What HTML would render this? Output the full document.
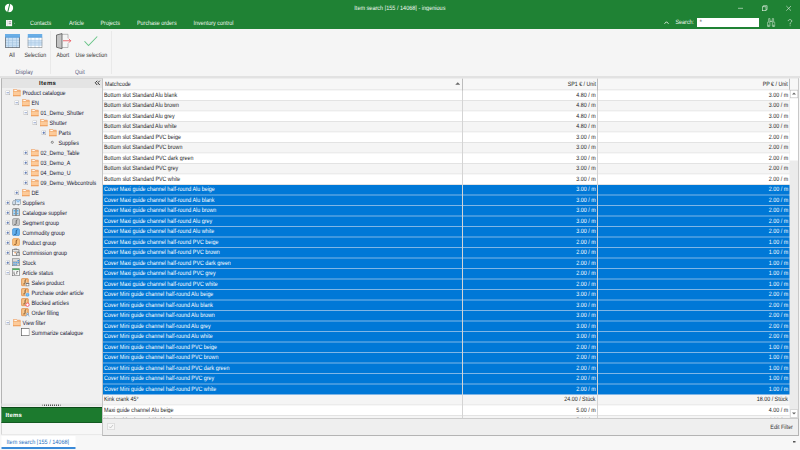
<!DOCTYPE html>
<html><head><meta charset="utf-8">
<style>
*{margin:0;padding:0;box-sizing:border-box}
html,body{width:800px;height:450px;overflow:hidden;background:#f5f5f5}
body{font-family:"Liberation Sans",sans-serif;text-rendering:geometricPrecision}
#z{position:absolute;left:0;top:0;width:1600px;height:900px;transform:scale(0.5);transform-origin:0 0;overflow:hidden;background:#f5f5f5}
.a{position:absolute}
#hdr{left:0;top:0;width:1600px;height:58px;background:#1f8234}
.mt{position:absolute;top:38px;font-size:12.5px;color:#eef5ee;line-height:14px;white-space:nowrap;transform:scaleX(0.864);transform-origin:0 0}
#title{position:absolute;top:8px;left:0;width:1600px;text-align:center;font-size:12.5px;color:#f2f8f2;line-height:14px;transform:scaleX(0.883);transform-origin:798px 0}
#ribbon{left:0;top:58px;width:1600px;height:94px;background:#f5f5f5}
.rl{position:absolute;font-size:12.5px;color:#333;line-height:14px;white-space:nowrap;margin-top:-2px;transform:scaleX(0.844);transform-origin:0 0}
.gl{position:absolute;font-size:12.5px;color:#5a5a7a;line-height:14px;white-space:nowrap;transform:scaleX(0.844);transform-origin:0 0}
.sep{position:absolute;width:1px;background:#dcdcdc}
#band{left:0;top:152px;width:1600px;height:4px;background:#e2e2e2}
#left{left:2px;top:156px;width:202px;height:713px;background:#f0f0f0;border-left:2px solid #b4b4b4;border-top:2px solid #d2d2d2}
#lefthdr{left:4px;top:158px;width:200px;height:18px;background:#e4e4e4}
.tb{position:absolute}
.ti{position:absolute;width:18px;height:18px}
.ti svg{display:block}
.tt{position:absolute;font-size:12.5px;line-height:20px;color:#161630;white-space:nowrap;transform:scaleX(0.855);transform-origin:0 0}
#grid{left:204px;top:156px;width:1394px;height:681px;background:#fff;border-left:2px solid #c4c4c4;border-right:2px solid #c8c8c8;border-top:1px solid #d4d4d4;overflow:hidden}
#gh{position:absolute;left:0;top:0;width:1394px;height:24px;background:#f7f7f7;border-bottom:2px solid #e0e0e0}
.ghc{position:absolute;top:0;font-size:12.5px;line-height:22px;color:#262626;white-space:nowrap;transform:scaleX(0.844)}
#rows{position:absolute;left:0;top:24px;width:1374px}
.r{position:relative;height:21px;background:#fff;border-bottom:2px solid #e3e3e3;font-size:12.5px;line-height:19px;color:#262626;white-space:nowrap}
.r.g{background:#f5f5f5}
.r.s{background:#0078d7;color:#fff;border-bottom:2px solid #80b6e6}
.c1{position:absolute;left:1.5px;top:-1px;transform:scaleX(0.855);transform-origin:0 0}
.c2{position:absolute;right:389px;top:-1px;transform:scaleX(0.855);transform-origin:100% 0}
.c3{position:absolute;right:4px;top:-1px;transform:scaleX(0.855);transform-origin:100% 0}
.vl{position:absolute;top:0;width:2px;height:682px;background:#d4d4d4}
#sb{position:absolute;left:1373px;top:22px;width:20px;height:660px;background:#ebebeb}
#filter{left:204px;top:836px;width:1394px;height:36px;background:#efefef;border-left:2px solid #c4c4c4;border-right:2px solid #b4b4b4;border-bottom:2px solid #b4b4b4;border-top:2px solid #cccccc}
#tabbar{left:0;top:872px;width:1600px;height:28px;background:#f7f7f7}
</style></head><body><div id="z">
<div id="hdr" class="a">
 <svg class="a" style="left:9px;top:7px" width="18" height="18" viewBox="0 0 18 18"><circle cx="9" cy="9" r="8.4" fill="#fff"/><path d="M10.5 1 L6.5 17" stroke="#1f8234" stroke-width="2"/></svg>
 <div id="title">Item search [155 / 14068] - ingenious</div>
 <svg class="a" style="left:1474px;top:14px" width="14" height="6"><path d="M2 2.6h10" stroke="#e8f2e8" stroke-width="1.2"/></svg>
 <svg class="a" style="left:1520px;top:8px" width="18" height="18"><rect x="4.6" y="5.6" width="7.4" height="7.8" fill="none" stroke="#e8f2e8" stroke-width="1.2"/><path d="M6.6 5.6V3.4h7.6v7.8h-2.2" fill="none" stroke="#e8f2e8" stroke-width="1.2"/></svg>
 <svg class="a" style="left:1570px;top:9px" width="16" height="16"><path d="M2.6 3l9.4 9.4M12 3L2.6 12.4" stroke="#e8f2e8" stroke-width="1.2"/></svg>
 <svg class="a" style="left:11px;top:39px" width="24" height="14"><rect x="1" y="1" width="12.2" height="12.6" fill="#f8f8f8"/><path d="M3.6 1v12.6" stroke="#c8c8c8" stroke-width="1"/><path d="M6.4 4.6h4.8M6.4 8.4h4.8" stroke="#666" stroke-width="1.4"/><circle cx="18" cy="7.6" r="0.9" fill="#b8c8b8"/></svg>
 <div class="mt" style="left:60px">Contacts</div>
 <div class="mt" style="left:138px">Article</div>
 <div class="mt" style="left:201px">Projects</div>
 <div class="mt" style="left:274px">Purchase orders</div>
 <div class="mt" style="left:387px">Inventory control</div>
 <svg class="a" style="left:1327px;top:40px" width="12" height="10"><path d="M2 7.5l4-4 4 4" fill="none" stroke="#e8f2e8" stroke-width="1.9"/></svg>
 <div class="mt" style="left:1351px;top:37px">Search:</div>
 <div class="a" style="left:1394px;top:35.5px;width:124px;height:18.5px;background:#fff"></div><div class="a" style="left:1399px;top:37px;font-size:13px;line-height:14px;color:#555">*</div>
 <svg class="a" style="left:1534px;top:36px" width="17" height="18" viewBox="0 0 17 18"><g fill="none" stroke="#dcebdc" stroke-width="1.1"><path d="M3.3 7.5V1.2h2.6v6.3M10.6 7.5V1.2h2.6v6.3"/><path d="M5.9 6.6h4.7" stroke-width="1.6"/><rect x="0.8" y="8.2" width="5" height="8.8" rx="0.8"/><rect x="10.7" y="8.2" width="5" height="8.8" rx="0.8"/><circle cx="3.3" cy="15" r="1.1"/><circle cx="13.2" cy="15" r="1.1"/></g></svg>
 <svg class="a" style="left:1574px;top:38px" width="12" height="16"><path d="M2.5 4.2C2.5 2.2 4 1.2 6 1.2s3.5 1.1 3.5 3c0 2.4-3.3 2.6-3.3 5.3v1.3" fill="none" stroke="#e8f2e8" stroke-width="1.3"/><circle cx="6.2" cy="13.6" r="0.9" fill="#e8f2e8"/></svg>
</div>
<div id="ribbon" class="a">
 <svg class="a" style="left:10px;top:10px" width="30" height="28" viewBox="0 0 30 28"><rect x="0" y="0" width="30" height="28" fill="#cde2f5"/><path d="M0 12.6h30M0 17.6h30M0 22.6h30M7 7v21M15 7v21M23 7v21" stroke="#9fbfdc" stroke-width="1.2"/><rect x="0" y="0" width="30" height="7" fill="#6aaee6"/><path d="M0 6.5h30" stroke="#3f8ad0" stroke-width="1"/><path d="M0.7 7v20.3h28.6V7" fill="none" stroke="#4a4a4a" stroke-width="1.4"/></svg>
 <svg class="a" style="left:55px;top:10px" width="30" height="28" viewBox="0 0 30 28"><rect x="0" y="0" width="30" height="28" fill="#fff"/><rect x="0" y="12.6" width="30" height="10" fill="#cde2f5"/><path d="M0 12.6h30M0 17.6h30M0 22.6h30M7 7v21M15 7v21M23 7v21" stroke="#a9c7e2" stroke-width="1.2"/><rect x="0" y="0" width="30" height="7" fill="#6aaee6"/><path d="M0 6.5h30" stroke="#3f8ad0" stroke-width="1"/><path d="M0.7 7v20.3h28.6V7" fill="none" stroke="#6a6a6a" stroke-width="1.2"/></svg>
 <div class="rl" style="left:18px;top:46px">All</div>
 <div class="rl" style="left:49px;top:46px">Selection</div>
 <div class="sep" style="left:101px;top:4px;height:86px"></div>
 <svg class="a" style="left:111px;top:8px" width="34" height="34" viewBox="0 0 34 34"><path d="M13 2.6H25V10.5M25 20.5V29H13" fill="none" stroke="#9a9a9a" stroke-width="1.3"/><path d="M2 4L13 1.2V31.5L2 28.5z" fill="#c4c4c4" stroke="#505050" stroke-width="1.5"/><path d="M15 15.5H30.5M26.5 11.5l4 4-4 4" fill="none" stroke="#e8404a" stroke-width="1.5"/></svg>
 <svg class="a" style="left:167px;top:13px" width="30" height="22" viewBox="0 0 30 22"><path d="M2 11.5l8 8.5L27.5 2" fill="none" stroke="#68c487" stroke-width="2.1"/></svg>
 <div class="rl" style="left:113px;top:46px">Abort</div>
 <div class="rl" style="left:151px;top:46px">Use selection</div>
 <div class="gl" style="left:31px;top:78px">Display</div>
 <div class="gl" style="left:150px;top:78px">Quit</div>
 <div class="sep" style="left:222px;top:4px;height:86px"></div>
</div>
<div id="band" class="a"></div>
<div id="left" class="a"></div>
<div id="lefthdr" class="a"></div>
<div class="a" style="left:78px;top:156px;font-size:12px;font-weight:bold;line-height:20px;color:#222;letter-spacing:0.6px">Items</div>
<svg class="a" style="left:188px;top:160px" width="14" height="12"><path d="M6.5 1.5L2.5 5.5l4 4.5M11.5 1.5L7.5 5.5l4 4.5" fill="none" stroke="#222" stroke-width="1.8"/></svg>
<div class="a" style="left:0;top:0">
<svg class="tb" style="left:10.6px;top:181px" width="9" height="9" viewBox="0 0 9 9"><rect x="0.5" y="0.5" width="8" height="8" fill="#fcfcfc" stroke="#a8a8a8"/><path d="M2 4.5h5" stroke="#4a6ab0" stroke-width="1.2"/></svg><div class="ti" style="left:25.8px;top:178px"><svg width="16" height="15" viewBox="0 0 16 15"><path d="M0.6 0.6h6.4l1.6 1.6h6v3h-14z" fill="#f4b684" stroke="#eda068" stroke-width="1"/><rect x="2.6" y="1.8" width="5" height="2.6" fill="#fffaf4"/><rect x="0" y="4.5" width="15" height="10" fill="#fdcb9a"/><path d="M0.5 4.5v10M14.5 4.5v10" stroke="#f0a868" stroke-width="1"/><path d="M0 5h15" stroke="#eea462" stroke-width="1"/><rect x="0" y="12.6" width="15" height="2.2" fill="#ec9450"/></svg></div><div class="tt" style="left:44.6px;top:175px">Product catalogue</div>
<svg class="tb" style="left:28.6px;top:201px" width="9" height="9" viewBox="0 0 9 9"><rect x="0.5" y="0.5" width="8" height="8" fill="#fcfcfc" stroke="#a8a8a8"/><path d="M2 4.5h5" stroke="#4a6ab0" stroke-width="1.2"/></svg><div class="ti" style="left:43.8px;top:198px"><svg width="16" height="15" viewBox="0 0 16 15"><path d="M0.6 0.6h6.4l1.6 1.6h6v3h-14z" fill="#f4b684" stroke="#eda068" stroke-width="1"/><rect x="2.6" y="1.8" width="5" height="2.6" fill="#fffaf4"/><rect x="0" y="4.5" width="15" height="10" fill="#fdcb9a"/><path d="M0.5 4.5v10M14.5 4.5v10" stroke="#f0a868" stroke-width="1"/><path d="M0 5h15" stroke="#eea462" stroke-width="1"/><rect x="0" y="12.6" width="15" height="2.2" fill="#ec9450"/></svg></div><div class="tt" style="left:62.6px;top:195px">EN</div>
<svg class="tb" style="left:46.6px;top:221px" width="9" height="9" viewBox="0 0 9 9"><rect x="0.5" y="0.5" width="8" height="8" fill="#fcfcfc" stroke="#a8a8a8"/><path d="M2 4.5h5" stroke="#4a6ab0" stroke-width="1.2"/></svg><div class="ti" style="left:61.8px;top:218px"><svg width="16" height="15" viewBox="0 0 16 15"><path d="M0.6 0.6h6.4l1.6 1.6h6v3h-14z" fill="#f4b684" stroke="#eda068" stroke-width="1"/><rect x="2.6" y="1.8" width="5" height="2.6" fill="#fffaf4"/><rect x="0" y="4.5" width="15" height="10" fill="#fdcb9a"/><path d="M0.5 4.5v10M14.5 4.5v10" stroke="#f0a868" stroke-width="1"/><path d="M0 5h15" stroke="#eea462" stroke-width="1"/><rect x="0" y="12.6" width="15" height="2.2" fill="#ec9450"/></svg></div><div class="tt" style="left:80.6px;top:215px">01_Demo_Shutter</div>
<svg class="tb" style="left:64.6px;top:241px" width="9" height="9" viewBox="0 0 9 9"><rect x="0.5" y="0.5" width="8" height="8" fill="#fcfcfc" stroke="#a8a8a8"/><path d="M2 4.5h5" stroke="#4a6ab0" stroke-width="1.2"/></svg><div class="ti" style="left:79.8px;top:238px"><svg width="16" height="15" viewBox="0 0 16 15"><path d="M0.6 0.6h6.4l1.6 1.6h6v3h-14z" fill="#f4b684" stroke="#eda068" stroke-width="1"/><rect x="2.6" y="1.8" width="5" height="2.6" fill="#fffaf4"/><rect x="0" y="4.5" width="15" height="10" fill="#fdcb9a"/><path d="M0.5 4.5v10M14.5 4.5v10" stroke="#f0a868" stroke-width="1"/><path d="M0 5h15" stroke="#eea462" stroke-width="1"/><rect x="0" y="12.6" width="15" height="2.2" fill="#ec9450"/></svg></div><div class="tt" style="left:98.6px;top:235px">Shutter</div>
<svg class="tb" style="left:82.6px;top:261px" width="9" height="9" viewBox="0 0 9 9"><rect x="0.5" y="0.5" width="8" height="8" fill="#fcfcfc" stroke="#a8a8a8"/><path d="M2 4.5h5M4.5 2v5" stroke="#2d4f9a" stroke-width="1.3"/></svg><div class="ti" style="left:97.8px;top:258px"><svg width="16" height="15" viewBox="0 0 16 15"><path d="M0.6 0.6h6.4l1.6 1.6h6v3h-14z" fill="#f4b684" stroke="#eda068" stroke-width="1"/><rect x="2.6" y="1.8" width="5" height="2.6" fill="#fffaf4"/><rect x="0" y="4.5" width="15" height="10" fill="#fdcb9a"/><path d="M0.5 4.5v10M14.5 4.5v10" stroke="#f0a868" stroke-width="1"/><path d="M0 5h15" stroke="#eea462" stroke-width="1"/><rect x="0" y="12.6" width="15" height="2.2" fill="#ec9450"/></svg></div><div class="tt" style="left:116.6px;top:255px">Parts</div>
<div class="ti" style="left:95.8px;top:276px"><svg width="16" height="14" viewBox="0 0 16 14"><circle cx="8.6" cy="8.6" r="2.1" fill="none" stroke="#555" stroke-width="1.3"/></svg></div><div class="tt" style="left:116.6px;top:275px">Supplies</div>
<svg class="tb" style="left:46.6px;top:301px" width="9" height="9" viewBox="0 0 9 9"><rect x="0.5" y="0.5" width="8" height="8" fill="#fcfcfc" stroke="#a8a8a8"/><path d="M2 4.5h5M4.5 2v5" stroke="#2d4f9a" stroke-width="1.3"/></svg><div class="ti" style="left:61.8px;top:298px"><svg width="16" height="15" viewBox="0 0 16 15"><path d="M0.6 0.6h6.4l1.6 1.6h6v3h-14z" fill="#f4b684" stroke="#eda068" stroke-width="1"/><rect x="2.6" y="1.8" width="5" height="2.6" fill="#fffaf4"/><rect x="0" y="4.5" width="15" height="10" fill="#fdcb9a"/><path d="M0.5 4.5v10M14.5 4.5v10" stroke="#f0a868" stroke-width="1"/><path d="M0 5h15" stroke="#eea462" stroke-width="1"/><rect x="0" y="12.6" width="15" height="2.2" fill="#ec9450"/></svg></div><div class="tt" style="left:80.6px;top:295px">02_Demo_Table</div>
<svg class="tb" style="left:46.6px;top:321px" width="9" height="9" viewBox="0 0 9 9"><rect x="0.5" y="0.5" width="8" height="8" fill="#fcfcfc" stroke="#a8a8a8"/><path d="M2 4.5h5M4.5 2v5" stroke="#2d4f9a" stroke-width="1.3"/></svg><div class="ti" style="left:61.8px;top:318px"><svg width="16" height="15" viewBox="0 0 16 15"><path d="M0.6 0.6h6.4l1.6 1.6h6v3h-14z" fill="#f4b684" stroke="#eda068" stroke-width="1"/><rect x="2.6" y="1.8" width="5" height="2.6" fill="#fffaf4"/><rect x="0" y="4.5" width="15" height="10" fill="#fdcb9a"/><path d="M0.5 4.5v10M14.5 4.5v10" stroke="#f0a868" stroke-width="1"/><path d="M0 5h15" stroke="#eea462" stroke-width="1"/><rect x="0" y="12.6" width="15" height="2.2" fill="#ec9450"/></svg></div><div class="tt" style="left:80.6px;top:315px">03_Demo_A</div>
<svg class="tb" style="left:46.6px;top:341px" width="9" height="9" viewBox="0 0 9 9"><rect x="0.5" y="0.5" width="8" height="8" fill="#fcfcfc" stroke="#a8a8a8"/><path d="M2 4.5h5M4.5 2v5" stroke="#2d4f9a" stroke-width="1.3"/></svg><div class="ti" style="left:61.8px;top:338px"><svg width="16" height="15" viewBox="0 0 16 15"><path d="M0.6 0.6h6.4l1.6 1.6h6v3h-14z" fill="#f4b684" stroke="#eda068" stroke-width="1"/><rect x="2.6" y="1.8" width="5" height="2.6" fill="#fffaf4"/><rect x="0" y="4.5" width="15" height="10" fill="#fdcb9a"/><path d="M0.5 4.5v10M14.5 4.5v10" stroke="#f0a868" stroke-width="1"/><path d="M0 5h15" stroke="#eea462" stroke-width="1"/><rect x="0" y="12.6" width="15" height="2.2" fill="#ec9450"/></svg></div><div class="tt" style="left:80.6px;top:335px">04_Demo_U</div>
<svg class="tb" style="left:46.6px;top:361px" width="9" height="9" viewBox="0 0 9 9"><rect x="0.5" y="0.5" width="8" height="8" fill="#fcfcfc" stroke="#a8a8a8"/><path d="M2 4.5h5M4.5 2v5" stroke="#2d4f9a" stroke-width="1.3"/></svg><div class="ti" style="left:61.8px;top:358px"><svg width="16" height="15" viewBox="0 0 16 15"><path d="M0.6 0.6h6.4l1.6 1.6h6v3h-14z" fill="#f4b684" stroke="#eda068" stroke-width="1"/><rect x="2.6" y="1.8" width="5" height="2.6" fill="#fffaf4"/><rect x="0" y="4.5" width="15" height="10" fill="#fdcb9a"/><path d="M0.5 4.5v10M14.5 4.5v10" stroke="#f0a868" stroke-width="1"/><path d="M0 5h15" stroke="#eea462" stroke-width="1"/><rect x="0" y="12.6" width="15" height="2.2" fill="#ec9450"/></svg></div><div class="tt" style="left:80.6px;top:355px">09_Demo_Webcontrols</div>
<svg class="tb" style="left:28.6px;top:381px" width="9" height="9" viewBox="0 0 9 9"><rect x="0.5" y="0.5" width="8" height="8" fill="#fcfcfc" stroke="#a8a8a8"/><path d="M2 4.5h5M4.5 2v5" stroke="#2d4f9a" stroke-width="1.3"/></svg><div class="ti" style="left:43.8px;top:378px"><svg width="16" height="15" viewBox="0 0 16 15"><path d="M0.6 0.6h6.4l1.6 1.6h6v3h-14z" fill="#f4b684" stroke="#eda068" stroke-width="1"/><rect x="2.6" y="1.8" width="5" height="2.6" fill="#fffaf4"/><rect x="0" y="4.5" width="15" height="10" fill="#fdcb9a"/><path d="M0.5 4.5v10M14.5 4.5v10" stroke="#f0a868" stroke-width="1"/><path d="M0 5h15" stroke="#eea462" stroke-width="1"/><rect x="0" y="12.6" width="15" height="2.2" fill="#ec9450"/></svg></div><div class="tt" style="left:62.6px;top:375px">DE</div>
<svg class="tb" style="left:10.6px;top:401px" width="9" height="9" viewBox="0 0 9 9"><rect x="0.5" y="0.5" width="8" height="8" fill="#fcfcfc" stroke="#a8a8a8"/><path d="M2 4.5h5M4.5 2v5" stroke="#2d4f9a" stroke-width="1.3"/></svg><div class="ti" style="left:23.8px;top:396px"><svg width="18" height="16" viewBox="0 0 18 16"><path d="M1 8l2-3h4v8H1z" fill="#cfdbe8" stroke="#7a8896"/><rect x="7" y="2.5" width="9.5" height="10.5" fill="#e6eef6" stroke="#6f7e8c"/><path d="M8.5 4.5l3.7 3 3.7-3" fill="none" stroke="#3d8fd8" stroke-width="1.2"/><rect x="9" y="4" width="6" height="5" fill="#8cc0ee" opacity=".6"/><circle cx="4" cy="13.5" r="1.6" fill="#888"/><circle cx="12.5" cy="13.5" r="1.6" fill="#888"/></svg></div><div class="tt" style="left:44.6px;top:395px">Suppliers</div>
<svg class="tb" style="left:10.6px;top:421px" width="9" height="9" viewBox="0 0 9 9"><rect x="0.5" y="0.5" width="8" height="8" fill="#fcfcfc" stroke="#a8a8a8"/><path d="M2 4.5h5M4.5 2v5" stroke="#2d4f9a" stroke-width="1.3"/></svg><div class="ti" style="left:23.8px;top:416px"><svg width="16" height="16" viewBox="0 0 16 16"><path d="M1 3.5Q1 1 3.5 1H12.5Q15 1 15 3.5V15.5H1Z" fill="#a8a8a8" stroke="#6a6a6a" stroke-width="1"/><rect x="2.6" y="2.6" width="4.4" height="11.5" fill="#d8ecfa"/><rect x="9" y="2.6" width="4.4" height="11.5" fill="#d8ecfa"/><rect x="3.2" y="4" width="3.2" height="3.2" fill="#5fb2ec"/><rect x="9.6" y="4" width="3.2" height="3.2" fill="#5fb2ec"/><rect x="3.2" y="9.4" width="3.2" height="3.2" fill="#5fb2ec"/><rect x="9.6" y="9.4" width="3.2" height="3.2" fill="#5fb2ec"/><path d="M8 1.5v14" stroke="#505050" stroke-width="1.6"/></svg></div><div class="tt" style="left:44.6px;top:415px">Catalogue supplier</div>
<svg class="tb" style="left:10.6px;top:441px" width="9" height="9" viewBox="0 0 9 9"><rect x="0.5" y="0.5" width="8" height="8" fill="#fcfcfc" stroke="#a8a8a8"/><path d="M2 4.5h5M4.5 2v5" stroke="#2d4f9a" stroke-width="1.3"/></svg><div class="ti" style="left:23.8px;top:436px"><svg width="16" height="16" viewBox="0 0 16 16"><rect x="1" y="1" width="14" height="14.5" rx="3" fill="#c4c4c4" stroke="#8c8c8c" stroke-width="1.2"/><path d="M11 3.5c-1.8 0-2.6 0.8-2.6 2.4v5.4c0 1-0.6 1.6-1.6 1.6H4.5" fill="none" stroke="#5a5a5a" stroke-width="1.6"/></svg></div><div class="tt" style="left:44.6px;top:435px">Segment group</div>
<svg class="tb" style="left:10.6px;top:461px" width="9" height="9" viewBox="0 0 9 9"><rect x="0.5" y="0.5" width="8" height="8" fill="#fcfcfc" stroke="#a8a8a8"/><path d="M2 4.5h5M4.5 2v5" stroke="#2d4f9a" stroke-width="1.3"/></svg><div class="ti" style="left:23.8px;top:456px"><svg width="16" height="16" viewBox="0 0 16 16"><rect x="1" y="1" width="14" height="14.5" rx="3" fill="#62b0ee" stroke="#3688d0" stroke-width="1.2"/><path d="M11 3.5c-1.8 0-2.6 0.8-2.6 2.4v5.4c0 1-0.6 1.6-1.6 1.6H4.5" fill="none" stroke="#1d4f80" stroke-width="1.6"/></svg></div><div class="tt" style="left:44.6px;top:455px">Commodity group</div>
<svg class="tb" style="left:10.6px;top:481px" width="9" height="9" viewBox="0 0 9 9"><rect x="0.5" y="0.5" width="8" height="8" fill="#fcfcfc" stroke="#a8a8a8"/><path d="M2 4.5h5M4.5 2v5" stroke="#2d4f9a" stroke-width="1.3"/></svg><div class="ti" style="left:23.8px;top:476px"><svg width="16" height="16" viewBox="0 0 16 16"><rect x="1" y="1" width="14" height="14.5" rx="3" fill="#f8c07c" stroke="#e29448" stroke-width="1.2"/><path d="M11 3.5c-1.8 0-2.6 0.8-2.6 2.4v5.4c0 1-0.6 1.6-1.6 1.6H4.5" fill="none" stroke="#7a4218" stroke-width="1.6"/></svg></div><div class="tt" style="left:44.6px;top:475px">Product group</div>
<svg class="tb" style="left:10.6px;top:501px" width="9" height="9" viewBox="0 0 9 9"><rect x="0.5" y="0.5" width="8" height="8" fill="#fcfcfc" stroke="#a8a8a8"/><path d="M2 4.5h5M4.5 2v5" stroke="#2d4f9a" stroke-width="1.3"/></svg><div class="ti" style="left:23.8px;top:496px"><svg width="16" height="16" viewBox="0 0 16 16"><path d="M5 3.5V1.8h5v1.7" fill="none" stroke="#555"/><rect x="1" y="3.5" width="13" height="11" fill="#fff" stroke="#555" stroke-width="1.2"/><path d="M1 6.5h13" stroke="#555"/><path d="M4 9.5h3.5l-1.2-1.2M7.5 9.5l-1.2 1.2" fill="none" stroke="#ea7a2a" stroke-width="1.2"/><rect x="9" y="9" width="6.5" height="6.5" rx="1" fill="#e8e8e8" stroke="#555" stroke-width="1.2"/><path d="M11 12h2.5" stroke="#555"/></svg></div><div class="tt" style="left:44.6px;top:495px">Commission group</div>
<svg class="tb" style="left:10.6px;top:521px" width="9" height="9" viewBox="0 0 9 9"><rect x="0.5" y="0.5" width="8" height="8" fill="#fcfcfc" stroke="#a8a8a8"/><path d="M2 4.5h5M4.5 2v5" stroke="#2d4f9a" stroke-width="1.3"/></svg><div class="ti" style="left:23.8px;top:516px"><svg width="16" height="16" viewBox="0 0 16 16"><rect x="1" y="1.5" width="14" height="14" fill="#dcdcdc" stroke="#7a7a7a" stroke-width="1.2"/><path d="M1 7h14M1 11.5h14" stroke="#9a9a9a"/><rect x="2.5" y="8.2" width="3" height="2.3" fill="#3d94e0"/><rect x="6.8" y="8.2" width="3" height="2.3" fill="#3d94e0"/><rect x="11" y="8.2" width="3" height="2.3" fill="#3d94e0"/><rect x="2.5" y="12.5" width="3" height="2.2" fill="#3d94e0"/><rect x="6.8" y="12.5" width="3" height="2.2" fill="#3d94e0"/><rect x="11" y="4" width="3" height="2.3" fill="#3d94e0"/></svg></div><div class="tt" style="left:44.6px;top:515px">Stock</div>
<svg class="tb" style="left:10.6px;top:541px" width="9" height="9" viewBox="0 0 9 9"><rect x="0.5" y="0.5" width="8" height="8" fill="#fcfcfc" stroke="#a8a8a8"/><path d="M2 4.5h5" stroke="#4a6ab0" stroke-width="1.2"/></svg><div class="ti" style="left:23.8px;top:536px"><svg width="16" height="16" viewBox="0 0 16 16"><rect x="1" y="1.5" width="14" height="14" fill="#fafafa" stroke="#6a6a6a" stroke-width="1.2"/><rect x="1" y="1" width="14" height="3.2" fill="#52b060"/><path d="M4 7v5.5M4 12.5h2.5M9.5 7v5.5M9.5 7h3" stroke="#444" stroke-width="1.3" fill="none"/></svg></div><div class="tt" style="left:44.6px;top:535px">Article status</div>
<div class="ti" style="left:41.8px;top:556px"><svg width="18" height="18" viewBox="0 0 18 18"><rect x="0.8" y="1" width="14" height="14.5" rx="2" fill="#f2a860" stroke="#d9823a" stroke-width="1.1"/><rect x="2.5" y="2.5" width="10" height="11" rx="1" fill="#f8c890"/><path d="M10.5 3.2c-1.6 0-2.4 0.8-2.4 2.2v5c0 0.9-0.6 1.5-1.5 1.5H4.6" fill="none" stroke="#5a3414" stroke-width="1.5"/><rect x="9.2" y="9.6" width="7.6" height="7" rx="1" fill="#666" stroke="#fff" stroke-width="0.8"/><rect x="10.8" y="12" width="4.4" height="3" fill="#fff"/></svg></div><div class="tt" style="left:62.6px;top:555px">Sales product</div>
<div class="ti" style="left:41.8px;top:576px"><svg width="18" height="18" viewBox="0 0 18 18"><rect x="0.8" y="1" width="14" height="14.5" rx="2" fill="#f2a860" stroke="#d9823a" stroke-width="1.1"/><rect x="2.5" y="2.5" width="10" height="11" rx="1" fill="#f8c890"/><path d="M10.5 3.2c-1.6 0-2.4 0.8-2.4 2.2v5c0 0.9-0.6 1.5-1.5 1.5H4.6" fill="none" stroke="#5a3414" stroke-width="1.5"/><circle cx="13" cy="13.4" r="4" fill="#3b9ae6" stroke="#fff" stroke-width="0.8"/><path d="M9.5 13.4h7M13 9.8v7.2" stroke="#bfe0fa" stroke-width="0.8"/></svg></div><div class="tt" style="left:62.6px;top:575px">Purchase order article</div>
<div class="ti" style="left:41.8px;top:596px"><svg width="18" height="18" viewBox="0 0 18 18"><rect x="0.8" y="1" width="14" height="14.5" rx="2" fill="#f2a860" stroke="#d9823a" stroke-width="1.1"/><rect x="2.5" y="2.5" width="10" height="11" rx="1" fill="#f8c890"/><path d="M10.5 3.2c-1.6 0-2.4 0.8-2.4 2.2v5c0 0.9-0.6 1.5-1.5 1.5H4.6" fill="none" stroke="#5a3414" stroke-width="1.5"/><circle cx="13" cy="13.4" r="3.4" fill="#fff" stroke="#f0506a" stroke-width="1.8"/></svg></div><div class="tt" style="left:62.6px;top:595px">Blocked articles</div>
<div class="ti" style="left:41.8px;top:616px"><svg width="18" height="18" viewBox="0 0 18 18"><rect x="0.8" y="1" width="14" height="14.5" rx="2" fill="#f2a860" stroke="#d9823a" stroke-width="1.1"/><rect x="2.5" y="2.5" width="10" height="11" rx="1" fill="#f8c890"/><path d="M10.5 3.2c-1.6 0-2.4 0.8-2.4 2.2v5c0 0.9-0.6 1.5-1.5 1.5H4.6" fill="none" stroke="#5a3414" stroke-width="1.5"/><circle cx="13" cy="11.6" r="1.7" fill="#fff" stroke="#3a8ee0" stroke-width="1.1"/><path d="M9.8 17c0.4-2.2 1.6-3.2 3.2-3.2s2.8 1 3.2 3.2" fill="#fff" stroke="#3a8ee0" stroke-width="1.1"/></svg></div><div class="tt" style="left:62.6px;top:615px">Order filling</div>
<svg class="tb" style="left:10.6px;top:641px" width="9" height="9" viewBox="0 0 9 9"><rect x="0.5" y="0.5" width="8" height="8" fill="#fcfcfc" stroke="#a8a8a8"/><path d="M2 4.5h5" stroke="#4a6ab0" stroke-width="1.2"/></svg><div class="ti" style="left:25.8px;top:638px"><svg width="16" height="15" viewBox="0 0 16 15"><path d="M0.6 0.6h6.4l1.6 1.6h6v3h-14z" fill="#f4b684" stroke="#eda068" stroke-width="1"/><rect x="2.6" y="1.8" width="5" height="2.6" fill="#fffaf4"/><rect x="0" y="4.5" width="15" height="10" fill="#fdcb9a"/><path d="M0.5 4.5v10M14.5 4.5v10" stroke="#f0a868" stroke-width="1"/><path d="M0 5h15" stroke="#eea462" stroke-width="1"/><rect x="0" y="12.6" width="15" height="2.2" fill="#ec9450"/></svg></div><div class="tt" style="left:44.6px;top:635px">View filter</div>
<div class="ti" style="left:41.8px;top:656px"><svg width="17" height="16" viewBox="0 0 17 16"><rect x="1" y="0.8" width="15.5" height="14.6" fill="#fff" stroke="#555" stroke-width="1.3"/></svg></div><div class="tt" style="left:62.6px;top:655px">Summarize catalogue</div>
</div>
<div class="a" style="left:3px;top:807px;width:201px;height:5px;background:#e6e6e6"></div><div class="a" style="left:3px;top:814px;width:201px;height:32px;background:#1c7a2e;border-top:2px solid #0c4a18;border-bottom:2px solid #135a22"></div><div class="a" style="left:85px;top:809px;width:36px;height:3px;background:repeating-linear-gradient(90deg,#555 0 2px,transparent 2px 4px)"></div>
<div class="a" style="left:11px;top:815px;font-size:12px;font-weight:bold;line-height:31px;color:#fff;letter-spacing:0.3px">Items</div>
<div class="a" style="left:3px;top:846px;width:201px;height:24px;background:#f7f7f7;border-bottom:1px solid #dadada"></div>
<div id="grid" class="a">
 <div id="gh">
  <div class="ghc" style="left:4px;transform-origin:0 0">Matchcode</div>
  <svg class="a" style="left:704px;top:7px" width="11" height="7"><path d="M0.5 5.5h10L5.5 0.5z" fill="#6a6a6a"/></svg>
  <div class="ghc" style="right:408px;transform-origin:100% 0">SP1 &#8364; / Unit</div>
  <div class="ghc" style="right:24px;transform-origin:100% 0">PP &#8364; / Unit</div>
 </div>
 <div id="rows">
<div class="r"><span class="c1">Bottom slot Standard Alu blank</span><span class="c2">4.80 / m</span><span class="c3">3.00 / m</span></div>
<div class="r g"><span class="c1">Bottom slot Standard Alu brown</span><span class="c2">4.80 / m</span><span class="c3">3.00 / m</span></div>
<div class="r"><span class="c1">Bottom slot Standard Alu grey</span><span class="c2">4.80 / m</span><span class="c3">3.00 / m</span></div>
<div class="r g"><span class="c1">Bottom slot Standard Alu white</span><span class="c2">4.80 / m</span><span class="c3">3.00 / m</span></div>
<div class="r"><span class="c1">Bottom slot Standard PVC beige</span><span class="c2">3.00 / m</span><span class="c3">2.00 / m</span></div>
<div class="r g"><span class="c1">Bottom slot Standard PVC brown</span><span class="c2">3.00 / m</span><span class="c3">2.00 / m</span></div>
<div class="r"><span class="c1">Bottom slot Standard PVC dark green</span><span class="c2">3.00 / m</span><span class="c3">2.00 / m</span></div>
<div class="r g"><span class="c1">Bottom slot Standard PVC grey</span><span class="c2">3.00 / m</span><span class="c3">2.00 / m</span></div>
<div class="r"><span class="c1">Bottom slot Standard PVC white</span><span class="c2">3.00 / m</span><span class="c3">2.00 / m</span></div>
<div class="r s"><span class="c1">Cover Maxi guide channel half-round Alu beige</span><span class="c2">3.00 / m</span><span class="c3">2.00 / m</span></div>
<div class="r s"><span class="c1">Cover Maxi guide channel half-round Alu blank</span><span class="c2">3.00 / m</span><span class="c3">2.00 / m</span></div>
<div class="r s"><span class="c1">Cover Maxi guide channel half-round Alu brown</span><span class="c2">3.00 / m</span><span class="c3">2.00 / m</span></div>
<div class="r s"><span class="c1">Cover Maxi guide channel half-round Alu grey</span><span class="c2">3.00 / m</span><span class="c3">2.00 / m</span></div>
<div class="r s"><span class="c1">Cover Maxi guide channel half-round Alu white</span><span class="c2">3.00 / m</span><span class="c3">2.00 / m</span></div>
<div class="r s"><span class="c1">Cover Maxi guide channel half-round PVC beige</span><span class="c2">2.00 / m</span><span class="c3">1.00 / m</span></div>
<div class="r s"><span class="c1">Cover Maxi guide channel half-round PVC brown</span><span class="c2">2.00 / m</span><span class="c3">1.00 / m</span></div>
<div class="r s"><span class="c1">Cover Maxi guide channel half-round PVC dark green</span><span class="c2">2.00 / m</span><span class="c3">1.00 / m</span></div>
<div class="r s"><span class="c1">Cover Maxi guide channel half-round PVC grey</span><span class="c2">2.00 / m</span><span class="c3">1.00 / m</span></div>
<div class="r s"><span class="c1">Cover Maxi guide channel half-round PVC white</span><span class="c2">2.00 / m</span><span class="c3">1.00 / m</span></div>
<div class="r s"><span class="c1">Cover Mini guide channel half-round Alu beige</span><span class="c2">3.00 / m</span><span class="c3">2.00 / m</span></div>
<div class="r s"><span class="c1">Cover Mini guide channel half-round Alu blank</span><span class="c2">3.00 / m</span><span class="c3">2.00 / m</span></div>
<div class="r s"><span class="c1">Cover Mini guide channel half-round Alu brown</span><span class="c2">3.00 / m</span><span class="c3">2.00 / m</span></div>
<div class="r s"><span class="c1">Cover Mini guide channel half-round Alu grey</span><span class="c2">3.00 / m</span><span class="c3">2.00 / m</span></div>
<div class="r s"><span class="c1">Cover Mini guide channel half-round Alu white</span><span class="c2">3.00 / m</span><span class="c3">2.00 / m</span></div>
<div class="r s"><span class="c1">Cover Mini guide channel half-round PVC beige</span><span class="c2">2.00 / m</span><span class="c3">1.00 / m</span></div>
<div class="r s"><span class="c1">Cover Mini guide channel half-round PVC brown</span><span class="c2">2.00 / m</span><span class="c3">1.00 / m</span></div>
<div class="r s"><span class="c1">Cover Mini guide channel half-round PVC dark green</span><span class="c2">2.00 / m</span><span class="c3">1.00 / m</span></div>
<div class="r s"><span class="c1">Cover Mini guide channel half-round PVC grey</span><span class="c2">2.00 / m</span><span class="c3">1.00 / m</span></div>
<div class="r s"><span class="c1">Cover Mini guide channel half-round PVC white</span><span class="c2">2.00 / m</span><span class="c3">1.00 / m</span></div>
<div class="r g"><span class="c1">Kink crank 45°</span><span class="c2">24.00 / Stück</span><span class="c3">18.00 / Stück</span></div>
<div class="r"><span class="c1">Maxi guide channel Alu beige</span><span class="c2">5.00 / m</span><span class="c3">4.00 / m</span></div>
<div class="r g"><span class="c1">Maxi guide channel Alu blank</span><span class="c2">5.00 / m</span><span class="c3">4.00 / m</span></div>
 </div>
 <div class="vl" style="left:718px"></div><div class="vl" style="left:718px;height:24px;background:#bdbdbd"></div>
 <div class="vl" style="left:988px"></div><div class="vl" style="left:988px;height:24px;background:#bdbdbd"></div>
 <div class="vl" style="left:1372px;height:24px;background:#bdbdbd"></div>
 <div id="sb">
  <div class="a" style="left:1px;top:1px;width:16px;height:16px;background:#fff;border:1px solid #bbb"></div>
  <svg class="a" style="left:4px;top:5px" width="10" height="6"><path d="M1 5h8L5 1z" fill="#666"/></svg>
  <div class="a" style="left:1px;top:18px;width:16px;height:124px;background:#fff"></div>
  <div class="a" style="left:1px;top:640px;width:16px;height:16px;background:#fff;border:1px solid #bbb"></div>
  <svg class="a" style="left:4px;top:645px" width="10" height="6"><path d="M1 1h8L5 5z" fill="#666"/></svg>
 </div>
</div>
<div id="filter" class="a">
 <div class="a" style="left:9px;top:8px;width:14px;height:14px;border:1px solid #c8c8c8;background:#f7f7f7"></div>
 <svg class="a" style="left:11px;top:11px" width="10" height="8"><path d="M1 4l3 3 5-6" fill="none" stroke="#aaa" stroke-width="1.2"/></svg>
 <div class="a" style="right:10px;top:0;font-size:12.5px;line-height:33px;color:#333;transform:scaleX(0.855);transform-origin:100% 0">Edit Filter</div>
</div>
<div id="tabbar" class="a">
 <div class="a" style="left:3px;top:0px;width:148px;height:26px;background:#fff"></div>
 <div class="a" style="left:3px;top:22px;width:148px;height:4px;background:#3b8ad8"></div>
 <div class="a" style="left:13px;top:2px;font-size:12.5px;line-height:18px;color:#2a6fc0;transform:scaleX(0.883);transform-origin:0 0">Item search [155 / 14068]</div>
 <div class="a" style="left:1586px;top:10px;width:4.5px;height:2.5px;background:#555"></div>
</div>
</div></body></html>
